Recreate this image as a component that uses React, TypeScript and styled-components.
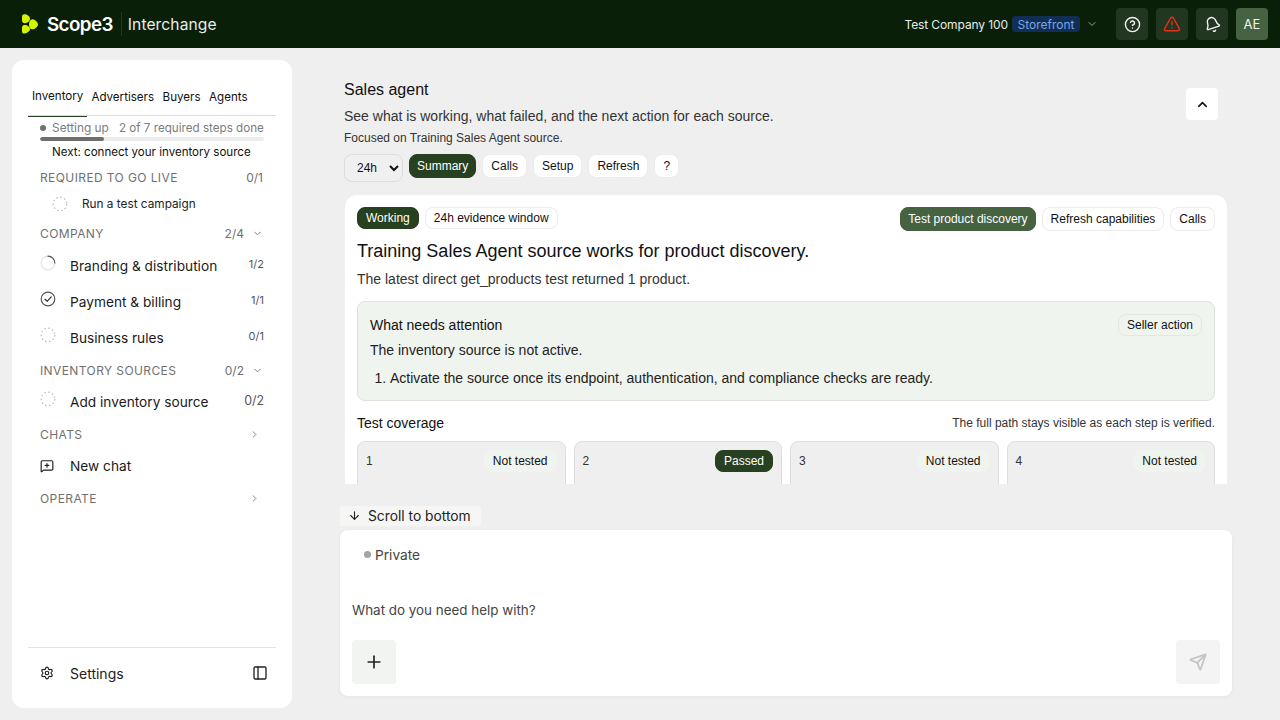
import { ReactNode } from "react";
import styled, { createGlobalStyle } from "styled-components";
import {
  ArrowDown,
  Bell,
  ChevronDown,
  ChevronRight,
  ChevronUp,
  CircleHelp,
  MessageSquarePlus,
  PanelLeft,
  Plus,
  Send,
  Settings,
  TriangleAlert,
} from "lucide-react";

const GlobalStyle = createGlobalStyle`
  html, body { margin: 0; height: 100%; }
  body {
    background: #efefef;
    color: #111;
    font-family: "Liberation Sans", Arial, sans-serif;
    overflow: hidden;
  }
  * { box-sizing: border-box; }
`;

// ------- top bar -------
const Page = styled.div`
  width: 1280px;
  height: 720px;
  display: flex;
  flex-direction: column;
`;

const TopBar = styled.header`
  height: 48px;
  flex: none;
  background: #0a1f08;
  display: flex;
  align-items: center;
  padding: 0 12px 0 21px;
  font-family: Inter, sans-serif;
  color: #fff;
`;

const Wordmark = styled.span`
  font-size: 18.8px;
  font-weight: 600;
  letter-spacing: -0.6px;
  margin-left: 8px;
`;

const BarDivider = styled.span`
  width: 1px;
  height: 24px;
  background: #24361f;
  margin: 0 6px 0 8px;
`;

const Product = styled.span`
  font-size: 15.6px;
  letter-spacing: 0.1px;
  color: #e9ece7;
`;

const CompanyPicker = styled.div`
  margin-left: auto;
  display: flex;
  align-items: center;
  font-size: 12px;
  letter-spacing: -0.1px;
  color: #e9ece7;
  margin-right: 10px;
`;

const AccountBadge = styled.span`
  margin-left: 4px;
  margin-right: 6px;
  height: 16px;
  padding: 0 5.5px;
  display: flex;
  align-items: center;
  background: #112f55;
  color: #78a6ea;
  border-radius: 4px;
  letter-spacing: 0;
`;

const BarButton = styled.div<{ $avatar?: boolean }>`
  width: 32px;
  height: 32px;
  border-radius: 4px;
  margin-left: 8px;
  display: flex;
  align-items: center;
  justify-content: center;
  font-size: 13px;
  background: ${(p) => (p.$avatar ? "#466241" : "#233621")};
  color: #f2f4f0;
`;

const TiltedBell = styled(Bell)`
  transform: rotate(-18deg);
`;

// ------- sidebar -------
const Body = styled.div`
  flex: 1;
  min-height: 0;
  display: flex;
`;

const Sidebar = styled.aside`
  width: 280px;
  flex: none;
  margin: 12px 0 12px 12px;
  background: #fff;
  border-radius: 12px;
  padding: 16px 16px 0;
  display: flex;
  flex-direction: column;
  font-family: Inter, sans-serif;
`;

const Tabs = styled.nav`
  display: flex;
  height: 40px;
  padding-top: 12px;
  border-bottom: 1px solid #dcdcdc;
`;

const Tab = styled.div<{ $active?: boolean }>`
  font-size: 11.6px;
  height: 28px;
  padding: ${(p) => (p.$active ? "1px 4px 0" : "2px 4px 0")};
  margin-right: ${(p) => (p.$active ? "0" : "0.5px")};
  color: #111;
  ${(p) => p.$active && "border-bottom: 1px solid #2a3f23; margin-bottom: -1px; height: 29px;"}
`;

const Progress = styled.div`
  padding: 5px 12px 0;
`;

const ProgressLine = styled.div`
  display: flex;
  align-items: center;
  height: 13px;
  font-size: 11.9px;
  white-space: nowrap;
  color: #7d7d7d;
`;

const ProgressDetail = styled.span`
  font-size: 11.65px;
`;

const Dot = styled.span<{ $color: string; $size: number }>`
  width: ${(p) => p.$size}px;
  height: ${(p) => p.$size}px;
  border-radius: 50%;
  background: ${(p) => p.$color};
  flex: none;
`;

const ProgressTrack = styled.div`
  height: 4px;
  border-radius: 2px;
  background: #ececec;
  margin-top: 3px;
  overflow: hidden;
`;

const ProgressFill = styled.div`
  height: 100%;
  background: #6e6e6e;
  border-radius: 2px;
`;

const NextStep = styled.div`
  font-size: 11.55px;
  color: #111;
  margin: 3px 0 0 12px;
  height: 15px;
  line-height: 16px;
`;

const SectionHead = styled.div<{ $h?: number; $tuck?: number }>`
  height: ${(p) => p.$h ?? 36}px;
  margin-bottom: ${(p) => -(p.$tuck ?? 0)}px;
  display: flex;
  align-items: center;
  padding-left: 12px;
  padding-right: 13px;
  font-size: 12px;
  letter-spacing: 0.4px;
  color: #707070;
`;

const SectionCount = styled.span`
  margin-left: auto;
  font-size: 12px;
  letter-spacing: 0;
`;

const SideChevron = styled(ChevronRight)`
  margin-left: auto;
  margin-right: 3px;
`;

const NavRow = styled.div`
  height: 36px;
  display: flex;
  align-items: center;
  padding: 0 12px;
  font-size: 13.7px;
  color: #1a1a1a;
`;

const NavIcon = styled.span`
  width: 30px;
  flex: none;
  display: flex;
  align-items: center;
  margin-top: -6px;
`;

const PlainIcon = styled(NavIcon)`
  margin-top: 0;
`;

const NavCount = styled.span<{ $large?: boolean }>`
  margin-left: auto;
  font-size: ${(p) => (p.$large ? 12.4 : 11)}px;
  color: #555;
  margin-top: -4px;
`;

const SubRow = styled.div`
  height: 16px;
  display: flex;
  align-items: center;
  padding: 1px 0 0 24px;
  font-size: 11.8px;
  color: #222;
  margin-bottom: 4px;
`;

const SidebarFoot = styled.div`
  margin-top: auto;
  height: 61px;
  border-top: 1px solid #e4e4e4;
  display: flex;
  align-items: center;
  padding: 0 8px 10px 12px;
  font-size: 14px;
  color: #222;
`;

const FootLabel = styled.span`
  flex: 1;
`;

// ------- main column -------
const Main = styled.main`
  flex: 1;
  min-width: 0;
  display: flex;
  flex-direction: column;
  padding-left: 48px;
  padding-right: 48px;
`;

const ScrollArea = styled.div`
  height: 436px;
  flex: none;
  overflow: hidden;
  padding: 33px 5px 0 4px;
`;

const HeadRow = styled.div`
  display: flex;
  justify-content: space-between;
`;

const PageTitle = styled.h1`
  margin: 0;
  font-size: 16px;
  font-weight: 400;
  line-height: 18px;
`;

const Lead = styled.p`
  margin: 8px 0 0;
  font-size: 14px;
  line-height: 18px;
  color: #333;
`;

const Note = styled.p`
  margin: 6px 0 0;
  font-size: 12px;
  line-height: 14px;
  color: #333;
`;

const CollapseButton = styled.div`
  width: 32px;
  height: 32px;
  background: #fff;
  border-radius: 4px;
  margin: 7px 9px 0 0;
  display: flex;
  align-items: center;
  justify-content: center;
`;

const ToolRow = styled.div`
  display: flex;
  align-items: flex-start;
  gap: 6px;
  margin-top: 9px;
`;

const RangeSelect = styled.select`
  width: 59px;
  height: 28px;
  border: 1px solid #ddd;
  border-radius: 8px;
  background: #f0f0f0;
  padding: 0 0 0 8px;
  font: 12px "Liberation Sans", Arial, sans-serif;
  color: #111;
`;

type PillTone = "dark" | "moss" | "soft" | "plain";

const pillFill: Record<PillTone, string> = {
  dark: "#27401f",
  moss: "#466241",
  soft: "#f0f4ef",
  plain: "#fff",
};

const pillEdge: Record<PillTone, string> = {
  dark: "#27401f",
  moss: "#466241",
  soft: "#e4e8e2",
  plain: "#ececec",
};

const Pill = styled.span<{ $tone?: PillTone; $tight?: boolean }>`
  height: 24px;
  display: inline-flex;
  align-items: center;
  padding: 0 ${(p) => (p.$tight ? 7 : 8)}px;
  border-radius: 8px;
  font-size: 12px;
  white-space: nowrap;
  border: 1px solid ${(p) => pillEdge[p.$tone ?? "plain"]};
  background: ${(p) => pillFill[p.$tone ?? "plain"]};
  color: ${(p) => (p.$tone === "dark" || p.$tone === "moss" ? "#fff" : "#111")};
`;

const Badge = styled(Pill)`
  height: 22px;
`;

const Card = styled.section`
  margin: 13px 0 0 1px;
  background: #fff;
  border-radius: 12px;
  padding: 12px;
`;

const CardTop = styled.div`
  display: flex;
  align-items: flex-start;
  gap: 6px;
`;

const CardActions = styled.div`
  margin-left: auto;
  display: flex;
  gap: 6px;
`;

const CardTitle = styled.h2`
  margin: 9px 0 0;
  font-size: 18px;
  font-weight: 400;
  line-height: 22px;
`;

const CardText = styled.p`
  margin: 8px 0 0;
  font-size: 14px;
  line-height: 18px;
  color: #333;
`;

const Attention = styled.div`
  margin-top: 13px;
  height: 100px;
  background: #f0f4ef;
  border: 1px solid #dde2db;
  border-radius: 8px;
  padding: 12px;
`;

const AttentionTop = styled.div`
  display: flex;
  justify-content: space-between;
  align-items: center;
  height: 22px;
  font-size: 14px;
`;

const AttentionText = styled.p`
  margin: 5px 0 0;
  font-size: 14px;
  line-height: 18px;
  color: #222;
`;

const AttentionList = styled.ol`
  margin: 10px 0 0;
  padding-left: 20px;
  font-size: 14px;
  line-height: 18px;
  color: #222;
`;

const CoverageHead = styled.div`
  display: flex;
  justify-content: space-between;
  align-items: center;
  margin-top: 13px;
  height: 18px;
  font-size: 14px;
`;

const CoverageNote = styled.span`
  font-size: 12px;
  color: #333;
`;

const StepGrid = styled.div`
  display: grid;
  grid-template-columns: repeat(4, 1fr);
  gap: 8px;
  margin-top: 9px;
`;

const StepCard = styled.div`
  height: 90px;
  background: #efefef;
  border: 1px solid #dedede;
  border-radius: 8px;
  padding: 8px;
  display: flex;
  justify-content: space-between;
  align-items: flex-start;
  font-size: 12px;
  color: #333;
`;

const StepNumber = styled.span`
  line-height: 22px;
`;

const StepPill = styled(Badge)<{ $passed?: boolean }>`
  ${(p) => !p.$passed && "background: #f0f4ef; border-color: #f0f4ef;"}
`;

// ------- composer -------
const ScrollChip = styled.div`
  margin-top: 22px;
  width: 141px;
  height: 20px;
  background: #f6f7f5;
  border-radius: 4px 4px 0 0;
  display: flex;
  align-items: center;
  padding: 0 0 1px 8px;
  gap: 7px;
  font: 13.8px Inter, sans-serif;
  color: #222;
`;

const Composer = styled.div`
  margin-top: 4px;
  height: 166px;
  background: #fff;
  border-radius: 8px;
  box-shadow: 0 1px 4px rgba(0, 0, 0, 0.05);
  padding: 12px;
  display: flex;
  flex-direction: column;
  font-family: Inter, sans-serif;
`;

const Visibility = styled.div`
  margin-left: 12px;
  height: 25px;
  display: flex;
  align-items: center;
  gap: 4px;
  font-size: 13.7px;
  color: #444;
`;

const Prompt = styled.div`
  margin-top: 33px;
  height: 20px;
  line-height: 20px;
  font-size: 13.4px;
  color: #444;
`;

const ComposerFoot = styled.div`
  margin-top: auto;
  display: flex;
  justify-content: space-between;
`;

const SquareButton = styled.div<{ $muted?: boolean }>`
  width: 44px;
  height: 44px;
  border-radius: 4px;
  background: ${(p) => (p.$muted ? "#f4f4f4" : "#f2f4f1")};
  display: flex;
  align-items: center;
  justify-content: center;
`;

const Spacer = styled.span<{ $w: number }>`
  width: ${(p) => p.$w}px;
  flex: none;
`;

// ------- drawings -------
function Logo() {
  return (
    <svg width="18" height="20" viewBox="0 0 18 20" fill="#d4f500">
      <path d="M2.500.5C5.300-.3 9 2.300 9 4.800 9 7.600 5.800 9.400 3.300 9.200 1.600 9 1 7.800 1 6.300V2.600C1 1.500 1.500.800 2.500.5Z" />
      <path d="M10.700 5.400c2.500-.4 6.300 2.600 6.300 5 0 2.400-3.800 5.200-6.300 4.800-1.800-.3-2.700-2.400-2.700-4.800 0-2.500.9-4.700 2.700-5Z" />
      <path d="M3.300 10.900c2.500-.2 5.700 1.500 5.700 4.200 0 2.500-3.700 4.900-6.500 4.300C1.500 19.200 1 18.400 1 17.400v-3.600c0-1.600.6-2.700 2.300-2.900Z" />
    </svg>
  );
}

function DashedRing() {
  return (
    <svg width="16" height="16" viewBox="0 0 16 16" fill="none">
      <circle cx="8" cy="8" r="6.800" stroke="#bdbdbd" strokeWidth="1.200" strokeDasharray="1.600 2.400" />
    </svg>
  );
}

function SpinnerRing() {
  return (
    <svg width="16" height="16" viewBox="0 0 16 16" fill="none">
      <circle cx="8" cy="8" r="6.800" stroke="#e2e2e2" strokeWidth="1.200" />
      <path d="M8 1.200A6.800 6.800 0 0 1 14.800 8" stroke="#555" strokeWidth="1.200" strokeLinecap="round" />
    </svg>
  );
}

function CheckRing() {
  return (
    <svg width="16" height="16" viewBox="0 0 16 16" fill="none">
      <circle cx="8" cy="8" r="6.800" stroke="#555" strokeWidth="1.200" />
      <path d="M5 8.200 7.200 10.300 11.200 5.800" stroke="#333" strokeWidth="1.200" strokeLinecap="round" strokeLinejoin="round" />
    </svg>
  );
}

function NavItem({ icon, label, count, large }: { icon: ReactNode; label: string; count: string; large?: boolean }) {
  return (
    <NavRow>
      <NavIcon>{icon}</NavIcon>
      {label}
      <NavCount $large={large}>{count}</NavCount>
    </NavRow>
  );
}

const steps = [
  { n: 1, status: "Not tested" },
  { n: 2, status: "Passed" },
  { n: 3, status: "Not tested" },
  { n: 4, status: "Not tested" },
];

const progress = 2 / 7;

function App() {
  return (
    <Page>
      <GlobalStyle />
      <TopBar>
        <Logo />
        <Wordmark>Scope3</Wordmark>
        <BarDivider />
        <Product>Interchange</Product>
        <CompanyPicker>
          Test Company 100
          <AccountBadge>Storefront</AccountBadge>
          <ChevronDown size={12} color="#9aa598" />
        </CompanyPicker>
        <BarButton><CircleHelp size={17} /></BarButton>
        <BarButton><TriangleAlert size={18} color="#e5321b" /></BarButton>
        <BarButton><TiltedBell size={17} /></BarButton>
        <BarButton $avatar>AE</BarButton>
      </TopBar>

      <Body>
        <Sidebar>
          <Tabs>
            <Tab $active>Inventory</Tab>
            <Tab>Advertisers</Tab>
            <Tab>Buyers</Tab>
            <Tab>Agents</Tab>
          </Tabs>
          <Progress>
            <ProgressLine>
              <Dot $color="#707070" $size={6} />
              <Spacer $w={6} />
              Setting up
              <Spacer $w={10} />
              <ProgressDetail>2 of 7 required steps done</ProgressDetail>
            </ProgressLine>
            <ProgressTrack>
              <ProgressFill style={{ width: `${progress * 100}%` }} />
            </ProgressTrack>
            <NextStep>Next: connect your inventory source</NextStep>
          </Progress>
          <SectionHead>
            REQUIRED TO GO LIVE
            <SectionCount>0/1</SectionCount>
          </SectionHead>
          <SubRow>
            <PlainIcon><DashedRing /></PlainIcon>
            Run a test campaign
          </SubRow>
          <SectionHead $tuck={3}>
            COMPANY
            <SectionCount>2/4</SectionCount>
            <Spacer $w={8} />
            <ChevronDown size={11} color="#777" />
          </SectionHead>
          <NavItem icon={<SpinnerRing />} label="Branding & distribution" count="1/2" />
          <NavItem icon={<CheckRing />} label="Payment & billing" count="1/1" />
          <NavItem icon={<DashedRing />} label="Business rules" count="0/1" />
          <SectionHead $h={28}>
            INVENTORY SOURCES
            <SectionCount>0/2</SectionCount>
            <Spacer $w={8} />
            <ChevronDown size={11} color="#777" />
          </SectionHead>
          <NavItem icon={<DashedRing />} label="Add inventory source" count="0/2" large />
          <SectionHead $h={28}>
            CHATS
            <SideChevron size={11} color="#777" />
          </SectionHead>
          <NavRow>
            <PlainIcon><MessageSquarePlus size={14} color="#222" /></PlainIcon>
            New chat
          </NavRow>
          <SectionHead $h={28}>
            OPERATE
            <SideChevron size={11} color="#777" />
          </SectionHead>
          <SidebarFoot>
            <PlainIcon><Settings size={14} color="#222" /></PlainIcon>
            <FootLabel>Settings</FootLabel>
            <PanelLeft size={16} color="#222" />
          </SidebarFoot>
        </Sidebar>

        <Main>
          <ScrollArea>
            <HeadRow>
              <div>
                <PageTitle>Sales agent</PageTitle>
                <Lead>See what is working, what failed, and the next action for each source.</Lead>
                <Note>Focused on Training Sales Agent source.</Note>
              </div>
              <CollapseButton><ChevronUp size={15} color="#111" strokeWidth={2.4} /></CollapseButton>
            </HeadRow>
            <ToolRow>
              <RangeSelect defaultValue="24h">
                <option>24h</option>
              </RangeSelect>
              <Pill $tone="dark" $tight>Summary</Pill>
              <Pill>Calls</Pill>
              <Pill>Setup</Pill>
              <Pill>Refresh</Pill>
              <Pill>?</Pill>
            </ToolRow>
            <Card>
              <CardTop>
                <Badge $tone="dark">Working</Badge>
                <Badge>24h evidence window</Badge>
                <CardActions>
                  <Pill $tone="moss" $tight>Test product discovery</Pill>
                  <Pill>Refresh capabilities</Pill>
                  <Pill>Calls</Pill>
                </CardActions>
              </CardTop>
              <CardTitle>Training Sales Agent source works for product discovery.</CardTitle>
              <CardText>The latest direct get_products test returned 1 product.</CardText>
              <Attention>
                <AttentionTop>
                  What needs attention
                  <Badge $tone="soft">Seller action</Badge>
                </AttentionTop>
                <AttentionText>The inventory source is not active.</AttentionText>
                <AttentionList>
                  <li>Activate the source once its endpoint, authentication, and compliance checks are ready.</li>
                </AttentionList>
              </Attention>
              <CoverageHead>
                Test coverage
                <CoverageNote>The full path stays visible as each step is verified.</CoverageNote>
              </CoverageHead>
              <StepGrid>
                {steps.map((step) => (
                  <StepCard key={step.n}>
                    <StepNumber>{step.n}</StepNumber>
                    {step.status === "Passed" ? (
                      <StepPill $tone="dark" $passed>{step.status}</StepPill>
                    ) : (
                      <StepPill>{step.status}</StepPill>
                    )}
                  </StepCard>
                ))}
              </StepGrid>
            </Card>
          </ScrollArea>
          <ScrollChip>
            <ArrowDown size={13} color="#222" />
            Scroll to bottom
          </ScrollChip>
          <Composer>
            <Visibility>
              <Dot $color="#a3a3a3" $size={7} />
              Private
            </Visibility>
            <Prompt>What do you need help with?</Prompt>
            <ComposerFoot>
              <SquareButton><Plus size={20} color="#222" /></SquareButton>
              <SquareButton $muted><Send size={18} color="#c4c4c4" strokeWidth={2.4} /></SquareButton>
            </ComposerFoot>
          </Composer>
        </Main>
      </Body>
    </Page>
  );
}

export default App;
